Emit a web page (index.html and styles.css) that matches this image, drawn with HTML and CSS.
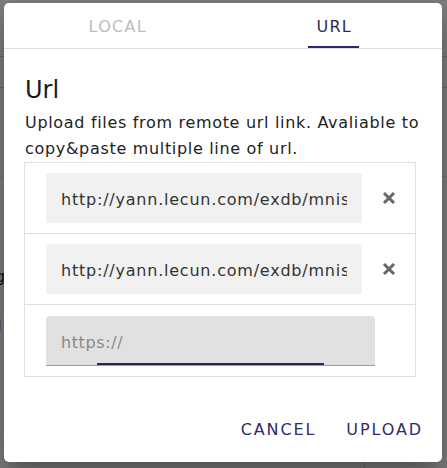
FILE: index.html
```html
<!DOCTYPE html>
<html>
<head>
<meta charset="utf-8">
<link rel="stylesheet" href="styles.css">
</head>
<body>
<div class="page">
  <div class="page-bar"></div>
  <div class="page-bar2"></div>
  <div class="page-sec"></div>
  <div class="page-text g">g</div>
  <div class="page-text r">I</div>
  <div class="page-foot"></div>
</div>
<div class="backdrop"></div>
<div class="dialog">
  <div class="tabs">
    <div class="tab"><span class="tab-label">LOCAL</span></div>
    <div class="tab active"><span class="tab-label">URL</span></div>
  </div>
  <div class="content">
    <h2 class="title">Url</h2>
    <p class="desc">Upload files from remote url link. Avaliable to copy&amp;paste multiple line of url.</p>
    <div class="list">
      <div class="row">
        <div class="field"><span class="field-text">http://yann.lecun.com/exdb/mnist/train-images-idx3-ubyte.gz</span></div>
        <div class="remove">
          <svg width="14" height="14" viewBox="0 0 14 14"><path d="M2 2L12 12M12 2L2 12" stroke="#676767" stroke-width="3" fill="none"/></svg>
        </div>
      </div>
      <div class="row">
        <div class="field"><span class="field-text">http://yann.lecun.com/exdb/mnist/train-labels-idx1-ubyte.gz</span></div>
        <div class="remove">
          <svg width="14" height="14" viewBox="0 0 14 14"><path d="M2 2L12 12M12 2L2 12" stroke="#676767" stroke-width="3" fill="none"/></svg>
        </div>
      </div>
      <div class="row last">
        <div class="field focus"><span class="field-text placeholder">https://</span><span class="focus-line"></span></div>
      </div>
    </div>
  </div>
  <div class="actions">
    <span class="btn">CANCEL</span>
    <span class="btn">UPLOAD</span>
  </div>
</div>
</body>
</html>
```

FILE: styles.css
```css
html, body {
  margin: 0;
  padding: 0;
}
body {
  width: 447px;
  height: 468px;
  overflow: hidden;
  background: #fff;
  font-family: "DejaVu Sans", sans-serif;
  position: relative;
}
.page {
  height: 468px;
}
.page-bar {
  height: 56px;
  border-bottom: 1px solid #d0d0d0;
}
.page-bar2 {
  height: 30px;
  border-bottom: 1px solid #d0d0d0;
}
.page-sec {
  height: 88px;
  border-bottom: 1px solid #e6e6e6;
}
.page-text {
  font-size: 16px;
  color: #222;
}
.page-text.g {
  margin-top: 90px;
  margin-left: -5px;
}
.page-text.r {
  margin-top: 30px;
  color: #8a1040;
  margin-left: -3px;
}
.page-foot {
  position: absolute;
  left: 364px;
  top: 460px;
  height: 10px;
  border-left: 1px solid #d0d0d0;
}
.backdrop {
  position: absolute;
  inset: 0;
  background: rgba(0, 0, 0, 0.5);
}
.dialog {
  position: absolute;
  left: 4px;
  top: 3px;
  width: 438px;
  height: 459px;
  background: #fff;
  border-radius: 5px;
  box-shadow: 0 11px 15px -7px rgba(0,0,0,.2), 0 24px 38px 3px rgba(0,0,0,.14), 0 9px 46px 8px rgba(0,0,0,.12);
  display: flex;
  flex-direction: column;
}
.tabs {
  display: grid;
  grid-template-columns: 1fr 1fr;
  height: 45px;
  padding-left: 5px;
  border-bottom: 1px solid #e0e0e0;
}
.tab {
  display: flex;
  justify-content: center;
}
.tab-label {
  box-sizing: border-box;
  height: 45px;
  padding: 14px 7px 0 8px;
  font-size: 16px;
  line-height: 20px;
  letter-spacing: 1.3px;
  color: #bdbdbd;
  border-bottom: 2px solid transparent;
}
.tab.active .tab-label {
  color: #2f2a55;
  border-bottom-color: #34236e;
}
.content {
  padding: 0 26px 0 20px;
}
.title {
  margin: 26px 0 0 1px;
  font-size: 24px;
  line-height: 30px;
  font-weight: 400;
  color: #1a1a1a;
}
.desc {
  margin: 5px -20px 0 1px;
  font-size: 16px;
  line-height: 26px;
  letter-spacing: 0.68px;
  color: #222;
}
.list {
  border: 1px solid #e0e0e0;
}
.row {
  display: flex;
  padding: 10px 0 10px 21px;
  border-bottom: 1px solid #e0e0e0;
}
.row.last {
  border-bottom: none;
  padding-bottom: 10px;
  padding-top: 11px;
}
.field {
  position: relative;
  box-sizing: border-box;
  width: 316px;
  height: 50px;
  padding: 3px 15px 0;
  background: #f1f1f1;
  border-radius: 4px 4px 0 0;
  overflow: hidden;
  white-space: nowrap;
  font-size: 16px;
  line-height: 47px;
  letter-spacing: 0.78px;
  color: #333;
}
.field-text {
  display: block;
  overflow: hidden;
}
.field.focus {
  width: 329px;
  background: #e1e1e1;
  border-bottom: 1px solid #9a9a9a;
  letter-spacing: 0.6px;
}
.placeholder {
  color: #8a8a8a;
}
.focus-line {
  position: absolute;
  left: 51px;
  width: 227px;
  bottom: 0;
  height: 2px;
  background: #2f1f6b;
}
.remove {
  flex: 1;
  display: flex;
  align-items: center;
  justify-content: center;
}
.actions {
  display: flex;
  justify-content: flex-end;
  gap: 30px;
  padding: 43px 19px 0 0;
}
.btn {
  font-size: 16px;
  line-height: 20px;
  letter-spacing: 1.9px;
  color: #2f2a6e;
}
```
